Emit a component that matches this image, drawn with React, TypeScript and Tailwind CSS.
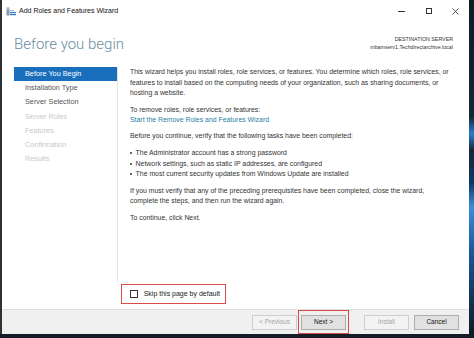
import React from 'react';

const navItems = [
  { label: 'Before You Begin', state: 'active' },
  { label: 'Installation Type', state: 'normal' },
  { label: 'Server Selection', state: 'normal' },
  { label: 'Server Roles', state: 'disabled' },
  { label: 'Features', state: 'disabled' },
  { label: 'Confirmation', state: 'disabled' },
  { label: 'Results', state: 'disabled' },
];

const bullets = [
  'The Administrator account has a strong password',
  'Network settings, such as static IP addresses, are configured',
  'The most current security updates from Windows Update are installed',
];

function WizardButton({ label, disabled }: { label: string; disabled?: boolean }) {
  return (
    <button
      className={`w-[45px] h-[15px] flex items-center justify-center text-[6.5px] border ${
        disabled ? 'bg-[#f3f3f3] border-[#cfcfcf] text-[#a6a6a6]' : 'bg-[#e1e1e1] border-[#adadad] text-[#111]'
      }`}
    >
      {label}
    </button>
  );
}

export default function App() {
  return (
    <div className="w-[474px] h-[338px] flex flex-col bg-[#16202b] overflow-hidden font-['Liberation_Sans',Arial,sans-serif]">
      <div className="flex h-[334px]">
        {/* left frame edge */}
        <div className="w-[2px] bg-[#2e3236]" />

        {/* window */}
        <div className="w-[467px] flex flex-col bg-white">
          {/* title bar */}
          <div className="h-[22px] flex items-center">
            <svg className="ml-[4px] w-[10px] h-[9px]" viewBox="0 0 10 9">
              <rect x="0.5" y="0.5" width="3" height="8" fill="#8a96a3" />
              <rect x="1" y="1.5" width="2" height="1" fill="#d5dbe1" />
              <rect x="4" y="5" width="6" height="1.2" fill="#2b79c2" />
              <rect x="4" y="7" width="6" height="1.2" fill="#2b79c2" />
              <rect x="4" y="3" width="4" height="1.2" fill="#9fb3c7" />
            </svg>
            <span className="ml-[3px] text-[7px] text-[#111]">Add Roles and Features Wizard</span>
            <div className="ml-auto flex h-full">
              <div className="w-[27px] flex items-center justify-center">
                <div className="w-[7px] h-px bg-[#333]" />
              </div>
              <div className="w-[27px] flex items-center justify-center">
                <div className="w-[6px] h-[6px] border border-[#333]" />
              </div>
              <div className="w-[27px] flex items-center justify-center">
                <svg className="w-[7px] h-[7px]" viewBox="0 0 7 7">
                  <path d="M0.5 0.5L6.5 6.5M6.5 0.5L0.5 6.5" stroke="#333" strokeWidth="0.8" />
                </svg>
              </div>
            </div>
          </div>

          {/* header */}
          <div className="h-[45px] flex items-start justify-between pl-[12px] pr-[16px]">
            <h1 className="mt-[12px] text-[15px] leading-[20px] font-light text-[#6b8ca0] font-['Roboto',sans-serif]">
              Before you begin
            </h1>
            <div className="mt-[13px] text-right text-[5.3px] leading-[8px] text-[#333]">
              <div>DESTINATION SERVER</div>
              <div>mbamserv1.Techdirectarchive.local</div>
            </div>
          </div>

          {/* body */}
          <div className="flex-1 flex flex-col">
            <div className="h-[215px] flex">
              {/* nav */}
              <div className="w-[115px] pl-[12px] flex flex-col">
                {navItems.map((item) => (
                  <div
                    key={item.label}
                    className={`h-[14.3px] flex items-center pl-[11px] text-[7.3px] whitespace-nowrap ${
                      item.state === 'active'
                        ? 'bg-[#1a6fbd] text-white'
                        : item.state === 'normal'
                          ? 'text-[#555]'
                          : 'text-[#c9c9c9]'
                    }`}
                  >
                    {item.label}
                  </div>
                ))}
              </div>

              {/* content */}
              <div className="flex-1 border-l border-[#e3e3e3] pl-[12px] text-[6.9px] leading-[10.5px] text-[#333] whitespace-nowrap">
                <p>
                  This wizard helps you install roles, role services, or features. You determine which roles, role services, or
                  <br />
                  features to install based on the computing needs of your organization, such as sharing documents, or
                  <br />
                  hosting a website.
                </p>
                <p className="mt-[6px]">
                  To remove roles, role services, or features:
                  <br />
                  <span className="text-[#1f7fa6]">Start the Remove Roles and Features Wizard</span>
                </p>
                <p className="mt-[5px]">Before you continue, verify that the following tasks have been completed:</p>
                <ul className="mt-[7px]">
                  {bullets.map((b) => (
                    <li key={b} className="flex items-center">
                      <span className="w-[1.6px] h-[1.6px] bg-[#333] rounded-full mr-[4px]" />
                      {b}
                    </li>
                  ))}
                </ul>
                <p className="mt-[6px] text-[#333]">
                  If you must verify that any of the preceding prerequisites have been completed, close the wizard,
                  <br />
                  complete the steps, and then run the wizard again.
                </p>
                <p className="mt-[6.5px]">To continue, click Next.</p>
              </div>
            </div>

            {/* skip checkbox */}
            <div className="mt-[2px] ml-[118.7px] w-[105.5px] h-[20px] border-[1.5px] border-[#d94a4a] flex items-center pl-[8px]">
              <div className="w-[8px] h-[8px] border border-[#333] bg-white" />
              <span className="ml-[6px] text-[7px] text-[#222] whitespace-nowrap">Skip this page by default</span>
            </div>
          </div>

          {/* footer */}
          <div className="mt-[5px] h-[25px] bg-[#f0f0f0] border-t border-[#dfdfdf] flex items-center justify-end pr-[10px]">
            <WizardButton label="< Previous" disabled />
            <div className="ml-[1px] w-[51px] h-[24px] border-[1.5px] border-[#d94a4a] flex items-center justify-center">
              <WizardButton label="Next >" />
            </div>
            <div className="ml-[15px]">
              <WizardButton label="Install" disabled />
            </div>
            <div className="ml-[5px]">
              <WizardButton label="Cancel" />
            </div>
          </div>
        </div>

        {/* desktop peeking on right */}
        <div className="flex-1 bg-[linear-gradient(to_bottom,#0f1a26_0%,#13263a_35%,#2a7fc9_40%,#13263a_45%,#0e3a66_55%,#3a8fd8_62%,#1b5a99_75%,#0f1a26_100%)]" />
      </div>
      <div className="h-[4px] bg-[#141c25]" />
    </div>
  );
}
